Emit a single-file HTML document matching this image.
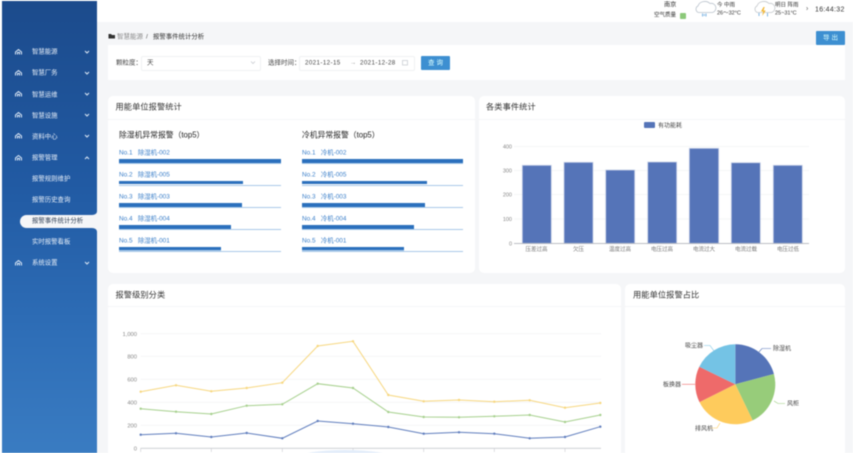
<!DOCTYPE html>
<html lang="zh"><head><meta charset="utf-8"><title>报警事件统计分析</title>
<style>
html,body{margin:0;padding:0;background:#fff}
#r{position:relative;width:853px;height:453px;overflow:hidden;background:#fff;font-family:"Liberation Sans","Noto Sans CJK SC",sans-serif;filter:blur(.45px)}
#r div,#r span.t{position:absolute;white-space:nowrap}
.t{line-height:10px;transform:translateY(-45%)}
.c{background:#fff;border-radius:5px}
.hl{height:1px;background:#f5f6f8}
.ct{font-size:8.2px;letter-spacing:.1px;color:#333}
.side{color:#e6eef8;font-size:6.4px}
.sub{font-size:7.8px;color:#222}
.lb{font-size:6.4px;color:#3b7fc9}
.tr{height:1px;background:#a9c9e8}
.br{height:3.300px;background:#2b70bd}
svg{position:absolute;left:0;top:0}
svg text{font-family:"Liberation Sans","Noto Sans CJK SC",sans-serif}
</style></head><body><div id="r">
<div style="left:97px;top:22px;width:756px;height:431px;background:#f5f6f8"></div>
<div style="left:2px;top:1px;width:95px;height:452px;background:linear-gradient(180deg,#1c4b8c 0%,#215aa3 40%,#2f6fb8 75%,#3a7cc2 100%)"></div>
<div style="left:20px;top:215px;width:77px;height:13px;background:#f5f6f8;border-radius:7px 0 0 7px"></div>
<svg width="97" height="235"><path d="M92 215a5 3.500 0 0 0 5-3.500v3.500zM92 228a5 3.500 0 0 1 5 3.500v-3.500z" fill="#f5f6f8"/></svg>

<span class="t side" style="position:absolute;left:32px;top:52px">智慧能源</span>
<span class="t side" style="position:absolute;left:32px;top:73px">智慧厂务</span>
<span class="t side" style="position:absolute;left:32px;top:94.500px">智慧运维</span>
<span class="t side" style="position:absolute;left:32px;top:115.500px">智慧设施</span>
<span class="t side" style="position:absolute;left:32px;top:136.500px">资料中心</span>
<span class="t side" style="position:absolute;left:32px;top:158px">报警管理</span>
<span class="t side" style="position:absolute;left:32px;top:179px">报警规则维护</span>
<span class="t side" style="position:absolute;left:32px;top:200px">报警历史查询</span>
<span class="t side" style="position:absolute;left:32px;top:221px;color:#2f3f55">报警事件统计分析</span>
<span class="t side" style="position:absolute;left:32px;top:242px">实时报警看板</span>
<span class="t side" style="position:absolute;left:32px;top:263px">系统设置</span>

<svg width="97" height="280" fill="none" stroke="#dce8f6" stroke-width="1">
<path d="M15.500 54.500v-2.500l3-2.500 3 2.500v2.500M17.500 54.500v-2h2v2M85 51l2 2 2-2"/>
<path d="M15.500 75.500v-2.500l3-2.500 3 2.500v2.500M17.500 75.500v-2h2v2M85 72l2 2 2-2"/>
<path d="M15.500 96.500v-2.500l3-2.500 3 2.500v2.500M17.500 96.500v-2h2v2M85 93l2 2 2-2"/>
<path d="M15.500 117.500v-2.500l3-2.500 3 2.500v2.500M17.500 117.500v-2h2v2M85 114l2 2 2-2"/>
<path d="M15.500 138.500v-2.500l3-2.500 3 2.500v2.500M17.500 138.500v-2h2v2M85 135l2 2 2-2"/>
<path d="M15.500 160.500v-2.500l3-2.500 3 2.500v2.500M17.500 160.500v-2h2v2M85 159l2-2 2 2"/>
<path d="M15.500 265.500v-2.500l3-2.500 3 2.500v2.500M17.500 265.500v-2h2v2M85 262l2 2 2-2"/>
</svg>

<!-- top bar -->
<span class="t" style="position:absolute;left:664px;top:4.500px;font-size:6.200px;color:#222">南京</span>
<span class="t" style="position:absolute;left:654px;top:15px;font-size:5.500px;color:#333">空气质量</span>
<div style="left:680px;top:12.500px;width:6px;height:6px;background:#8cc97a;border-radius:1px"></div>
<span class="t" style="position:absolute;left:717px;top:4.500px;font-size:5.500px;color:#333">今 中雨</span>
<span class="t" style="position:absolute;left:717px;top:13px;font-size:5.500px;color:#333">26～32°C</span>
<span class="t" style="position:absolute;left:775px;top:4.500px;font-size:5.500px;color:#333">明日 阵雨</span>
<span class="t" style="position:absolute;left:775px;top:13px;font-size:5.500px;color:#333">25~31°C</span>
<span class="t" style="position:absolute;left:806px;top:9px;font-size:7px;color:#555">›</span>
<span class="t" style="position:absolute;left:815px;top:9.500px;font-size:7px;letter-spacing:.3px;color:#333">16:44:32</span>
<svg width="853" height="30" fill="none">
<path d="M698.500 12.500a3.500 3.500 0 0 1-.5-6.500 7 6 0 0 1 12-2.500 4.500 4.500 0 0 1 2.500 9z" fill="#fff" stroke="#b9c2cc" stroke-width=".8"/>
<path d="M702.500 13.500v3M706 13.500v3M704.200 14v2" stroke="#7eb6e4" stroke-width="1"/>
<path d="M757.500 12.500a3.500 3.500 0 0 1-.5-6.500 7 6 0 0 1 12-2.500 4.500 4.500 0 0 1 2.500 9z" fill="#fff" stroke="#c4c8cc" stroke-width=".8"/>
<path d="M763.500 7l-2.500 4.500h2.200l-1 4.500 3.500-5.500h-2.200l1.200-3.500z" fill="#f2b632"/>
<path d="M767.500 13v3.500M759 13v3" stroke="#7eb6e4"/>
</svg>

<!-- breadcrumb -->
<svg width="120" height="45"><path d="M108.500 34h2.500l1 1h3v3.500h-6.500z" fill="#333"/></svg>
<span class="t" style="position:absolute;left:117px;top:36.500px;font-size:6.500px;color:#888">智慧能源</span>
<span class="t" style="position:absolute;left:146px;top:36.500px;font-size:6.500px;color:#555">/</span>
<span class="t" style="position:absolute;left:153px;top:36.500px;font-size:6.400px;color:#333">报警事件统计分析</span>
<div style="left:816px;top:31px;width:29px;height:14px;background:#3d8fd1;border-radius:1px"></div>
<span class="t" style="position:absolute;left:823px;top:38px;font-size:6.500px;letter-spacing:2px;color:#dff">导出</span>

<!-- filter -->
<div style="left:108px;top:45px;width:737px;height:35px;background:#fff"></div>
<span class="t" style="position:absolute;left:116px;top:62.500px;font-size:6.500px;color:#444">颗粒度：</span>
<div style="left:141px;top:55.500px;width:118px;height:13px;border:1px solid #f0f1f3;border-radius:2px"></div>
<span class="t" style="position:absolute;left:147px;top:62.500px;font-size:6.500px;color:#444">天</span>
<svg width="270" height="70" fill="none"><path d="M251 61.500l2 2 2-2" stroke="#c8ccd2" stroke-width=".8"/></svg>
<span class="t" style="position:absolute;left:268px;top:62.500px;font-size:6.500px;color:#444">选择时间：</span>
<div style="left:299px;top:55.500px;width:114px;height:13px;border:1px solid #f0f1f3;border-radius:2px"></div>
<span class="t" style="position:absolute;left:305px;top:62.500px;font-size:6.200px;letter-spacing:.4px;color:#444">2021-12-15</span>
<span class="t" style="position:absolute;left:350px;top:62.500px;font-size:6.200px;color:#999">→</span>
<span class="t" style="position:absolute;left:360px;top:62.500px;font-size:6.200px;letter-spacing:.4px;color:#444">2021-12-28</span>
<svg width="420" height="70" fill="none"><rect x="402.500" y="60.500" width="5" height="4.500" stroke="#c4c8ce" stroke-width=".7"/></svg>
<div style="left:421px;top:55.500px;width:29px;height:14px;background:#3d8fd1;border-radius:1px"></div>
<span class="t" style="position:absolute;left:428px;top:62.500px;font-size:6.500px;letter-spacing:2px;color:#dff">查询</span>

<!-- cards -->
<div class="c" style="left:108px;top:96px;width:367px;height:177px"></div>
<div class="c" style="left:479px;top:96px;width:366px;height:177px"></div>
<div class="c" style="left:108px;top:284px;width:513px;height:175px"></div>
<div class="c" style="left:625px;top:284px;width:220px;height:175px"></div>
<div class="hl" style="left:108px;top:119px;width:367px"></div>
<div class="hl" style="left:479px;top:119px;width:366px"></div>
<div class="hl" style="left:108px;top:306px;width:513px"></div>
<div class="hl" style="left:625px;top:306px;width:220px"></div>
<span class="t ct" style="position:absolute;left:115.500px;top:107px">用能单位报警统计</span>
<span class="t ct" style="position:absolute;left:486px;top:107px">各类事件统计</span>
<span class="t ct" style="position:absolute;left:115.500px;top:295px">报警级别分类</span>
<span class="t ct" style="position:absolute;left:633px;top:295px">用能单位报警占比</span>

<span class="t sub" style="position:absolute;left:119px;top:135px">除湿机异常报警（top5）</span>
<span class="t sub" style="position:absolute;left:302px;top:135px">冷机异常报警（top5）</span>

<span class="t lb" style="position:absolute;left:119px;top:152.500px">No.1 &nbsp;&nbsp;除湿机-002</span>
<span class="t lb" style="position:absolute;left:119px;top:174.500px">No.2 &nbsp;&nbsp;除湿机-005</span>
<span class="t lb" style="position:absolute;left:119px;top:196.500px">No.3 &nbsp;&nbsp;除湿机-003</span>
<span class="t lb" style="position:absolute;left:119px;top:218.500px">No.4 &nbsp;&nbsp;除湿机-004</span>
<span class="t lb" style="position:absolute;left:119px;top:240.500px">No.5 &nbsp;&nbsp;除湿机-001</span>
<span class="t lb" style="position:absolute;left:302px;top:152.500px">No.1 &nbsp;&nbsp;冷机-002</span>
<span class="t lb" style="position:absolute;left:302px;top:174.500px">No.2 &nbsp;&nbsp;冷机-005</span>
<span class="t lb" style="position:absolute;left:302px;top:196.500px">No.3 &nbsp;&nbsp;冷机-003</span>
<span class="t lb" style="position:absolute;left:302px;top:218.500px">No.4 &nbsp;&nbsp;冷机-004</span>
<span class="t lb" style="position:absolute;left:302px;top:240.500px">No.5 &nbsp;&nbsp;冷机-001</span>

<div class="tr" style="left:119px;top:162px;width:162px;height:2px"></div><div class="br" style="left:119px;top:159.300px;width:162px"></div>
<div class="tr" style="left:119px;top:184.700px;width:162px"></div><div class="br" style="left:119px;top:181px;width:124px"></div>
<div class="tr" style="left:119px;top:206.800px;width:162px"></div><div class="br" style="left:119px;top:203.300px;width:123px"></div>
<div class="tr" style="left:119px;top:228.800px;width:162px"></div><div class="br" style="left:119px;top:225.300px;width:112px"></div>
<div class="tr" style="left:119px;top:250.800px;width:162px"></div><div class="tr" style="left:119px;top:250px;width:102px;height:2px"></div><div class="br" style="left:119px;top:247px;width:102px"></div>
<div class="tr" style="left:302px;top:162px;width:161px;height:2px"></div><div class="br" style="left:302px;top:159.300px;width:161px"></div>
<div class="tr" style="left:302px;top:184.700px;width:161px"></div><div class="br" style="left:302px;top:181px;width:125px"></div>
<div class="tr" style="left:302px;top:206.800px;width:161px"></div><div class="br" style="left:302px;top:203.300px;width:123px"></div>
<div class="tr" style="left:302px;top:228.800px;width:161px"></div><div class="br" style="left:302px;top:225.300px;width:112px"></div>
<div class="tr" style="left:302px;top:250.800px;width:161px"></div><div class="tr" style="left:302px;top:250px;width:102px;height:2px"></div><div class="br" style="left:302px;top:247px;width:102px"></div>

<!-- charts -->
<svg width="853" height="453" fill="none">
<rect x="644" y="122" width="11" height="6" rx="1" fill="#5574b8"/>
<text x="658" y="127.500" font-size="6" fill="#444">有功能耗</text>
<g stroke="#f2f3f5" stroke-width=".8">
<path d="M514 146.500H809M514 170.500H809M514 194.500H809M514 219H809"/>
</g>
<g fill="#5574b8" stroke="#c9d3e8" stroke-width=".8">
<rect x="522.300" y="165.300" width="29" height="78"/>
<rect x="564" y="162.300" width="29" height="81"/>
<rect x="605.700" y="170" width="29" height="73.300"/>
<rect x="647.700" y="162" width="29" height="81.300"/>
<rect x="689.300" y="148.300" width="29.400" height="95"/>
<rect x="731.300" y="162.700" width="29" height="80.600"/>
<rect x="773.300" y="165.300" width="29" height="78"/>
</g>
<path d="M514 243.500H809" stroke="#a6a9b0" stroke-width=".8"/>
<g font-size="5.500" fill="#888" text-anchor="end">
<text x="512" y="148.500">400</text><text x="512" y="172.500">300</text><text x="512" y="196.500">200</text><text x="512" y="221">100</text><text x="512" y="245.500">0</text>
</g>
<g font-size="5.500" fill="#777" text-anchor="middle">
<text x="536.500" y="251">压差过高</text><text x="578.500" y="251">欠压</text><text x="620" y="251">温度过高</text><text x="662" y="251">电压过高</text><text x="704" y="251">电流过大</text><text x="746" y="251">电流过载</text><text x="788" y="251">电压过低</text>
</g>

<g stroke="#f3f4f6" stroke-width=".8"><path d="M140.700 333.700H601M140.700 356.300H601M140.700 379.300H601M140.700 402.300H601M140.700 425.300H601"/></g>
<path d="M140.700 448.300H601" stroke="#c8cacf" stroke-width=".8"/>
<path d="M140.700 448v4M211.300 448v4M282.300 448v4M353 448v4M423.700 448v4M494.300 448v4M565 448v4" stroke="#c8cacf" stroke-width=".6"/>
<ellipse cx="345" cy="458" rx="48" ry="8" fill="#e3edfa"/>
<g font-size="5.800" fill="#888" text-anchor="end">
<text x="137" y="336">1,000</text><text x="137" y="358.500">800</text><text x="137" y="381.500">600</text><text x="137" y="404.500">400</text><text x="137" y="427.500">200</text><text x="137" y="450.500">0</text>
</g>
<polyline stroke="#f7d77f" stroke-width="1" points="140.700,391.700 176,385.300 211.300,391.300 246.700,388 282.300,382.700 317.700,346 353,341.300 388.300,395 423.700,401.300 459,400 494.300,401.700 529.700,400.300 565,407.700 600.300,403"/>
<polyline stroke="#a6d08d" stroke-width="1" points="140.700,408.700 176,411.700 211.300,414 246.700,405.700 282.300,404.300 317.700,383.700 353,388 388.300,412 423.700,417 459,417.300 494.300,416.300 529.700,415 565,422 600.300,415"/>
<polyline stroke="#5f7dbd" stroke-width="1" points="140.700,434.700 176,433.300 211.300,437 246.700,433 282.300,438.300 317.700,421 353,423.700 388.300,427 423.700,433.700 459,432.300 494.300,433.700 529.700,438.300 565,437 600.300,426.700"/>
<g fill="#f7d77f"><circle cx="140.700" cy="391.700" r="1.200"/><circle cx="176" cy="385.300" r="1.200"/><circle cx="211.300" cy="391.300" r="1.200"/><circle cx="246.700" cy="388" r="1.200"/><circle cx="282.300" cy="382.700" r="1.200"/><circle cx="317.700" cy="346" r="1.200"/><circle cx="353" cy="341.300" r="1.200"/><circle cx="388.300" cy="395" r="1.200"/><circle cx="423.700" cy="401.300" r="1.200"/><circle cx="459" cy="400" r="1.200"/><circle cx="494.300" cy="401.700" r="1.200"/><circle cx="529.700" cy="400.300" r="1.200"/><circle cx="565" cy="407.700" r="1.200"/><circle cx="600.300" cy="403" r="1.200"/></g>
<g fill="#a6d08d"><circle cx="140.700" cy="408.700" r="1.200"/><circle cx="176" cy="411.700" r="1.200"/><circle cx="211.300" cy="414" r="1.200"/><circle cx="246.700" cy="405.700" r="1.200"/><circle cx="282.300" cy="404.300" r="1.200"/><circle cx="317.700" cy="383.700" r="1.200"/><circle cx="353" cy="388" r="1.200"/><circle cx="388.300" cy="412" r="1.200"/><circle cx="423.700" cy="417" r="1.200"/><circle cx="459" cy="417.300" r="1.200"/><circle cx="494.300" cy="416.300" r="1.200"/><circle cx="529.700" cy="415" r="1.200"/><circle cx="565" cy="422" r="1.200"/><circle cx="600.300" cy="415" r="1.200"/></g>
<g fill="#5f7dbd"><circle cx="140.700" cy="434.700" r="1.200"/><circle cx="176" cy="433.300" r="1.200"/><circle cx="211.300" cy="437" r="1.200"/><circle cx="246.700" cy="433" r="1.200"/><circle cx="282.300" cy="438.300" r="1.200"/><circle cx="317.700" cy="421" r="1.200"/><circle cx="353" cy="423.700" r="1.200"/><circle cx="388.300" cy="427" r="1.200"/><circle cx="423.700" cy="433.700" r="1.200"/><circle cx="459" cy="432.300" r="1.200"/><circle cx="494.300" cy="433.700" r="1.200"/><circle cx="529.700" cy="438.300" r="1.200"/><circle cx="565" cy="437" r="1.200"/><circle cx="600.300" cy="426.700" r="1.200"/></g>

<path d="M735.300 384.300V344.300A40 40 0 0 1 773.900 373.950Z" fill="#5574b8"/>
<path d="M735.300 384.300L773.900 373.950A40 40 0 0 1 752.650 420.350Z" fill="#97cc7a"/>
<path d="M735.300 384.300L752.650 420.350A40 40 0 0 1 699.500 402.100Z" fill="#fecb5c"/>
<path d="M735.300 384.300L699.500 402.100A40 40 0 0 1 699.300 366.800Z" fill="#ee6a6a"/>
<path d="M735.300 384.300L699.300 366.800A40 40 0 0 1 735.300 344.300Z" fill="#74c3e5"/>
<path d="M759 352l3-3.500h9" stroke="#5574b8" stroke-width=".6"/>
<path d="M774 401l4 2.500h7" stroke="#97cc7a" stroke-width=".6"/>
<path d="M720 423l-3 5h-7" stroke="#fecb5c" stroke-width=".6"/>
<path d="M695 384.300h-13" stroke="#ee6a6a" stroke-width=".6"/>
<path d="M714 351l-4-5.500h-6" stroke="#74c3e5" stroke-width=".6"/>
<g font-size="6" fill="#444">
<text x="773" y="350.500">除湿机</text><text x="787" y="405.500">风柜</text><text x="695" y="430.500">排风机</text><text x="663" y="386.500">板换器</text><text x="685" y="347.500">吸尘器</text>
</g>
</svg>
</div></body></html>
